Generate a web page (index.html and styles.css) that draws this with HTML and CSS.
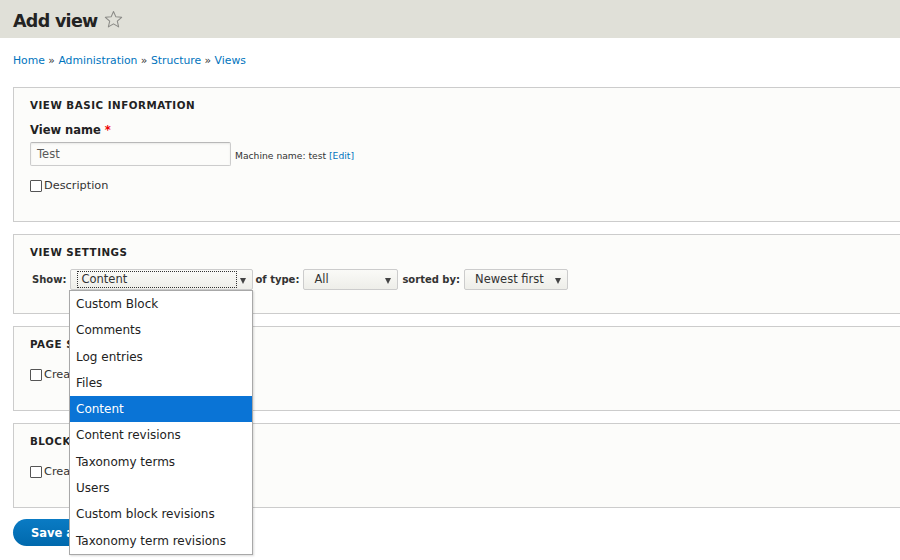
FILE: index.html
```html
<!DOCTYPE html>
<html>
<head>
<meta charset="utf-8">
<link rel="stylesheet" href="styles.css">
</head>
<body>
<header class="page-header">
  <h1 class="page-title">Add view</h1>
  <svg class="star" width="19" height="19" viewBox="0 0 20 20"><path d="M10 1.5 L12.5 7.2 L18.6 7.7 L14 11.8 L15.4 17.8 L10 14.6 L4.6 17.8 L6 11.8 L1.4 7.7 L7.5 7.2 Z" fill="none" stroke="#8a8a86" stroke-width="1.1" stroke-linejoin="round"/></svg>
</header>
<nav class="breadcrumb">
  <a href="#">Home</a> <span class="sep">»</span> <a href="#">Administration</a> <span class="sep">»</span> <a href="#">Structure</a> <span class="sep">»</span> <a href="#">Views</a>
</nav>
<main class="content">
  <section class="fieldset fs-basic">
    <div class="legend">View basic information</div>
    <div class="label">View name <span class="req">*</span></div>
    <div class="name-row">
      <div class="text-input">Test</div>
      <div class="machine">Machine name: test <a href="#">[Edit]</a></div>
    </div>
    <label class="check"><span class="box"></span>Description</label>
  </section>
  <section class="fieldset fs-settings">
    <div class="legend">View settings</div>
    <div class="settings-row">
      <span class="inline-label">Show:</span>
      <span class="select sel-show"><span class="focus">Content</span><span class="arrow"></span></span>
      <span class="inline-label">of type:</span>
      <span class="select sel-type"><span class="val">All</span><span class="arrow"></span></span>
      <span class="inline-label">sorted by:</span>
      <span class="select sel-sort"><span class="val">Newest first</span><span class="arrow"></span></span>
    </div>
  </section>
  <section class="fieldset fs-small">
    <div class="legend">Page settings</div>
    <label class="check"><span class="box"></span>Create a page</label>
  </section>
  <section class="fieldset fs-small">
    <div class="legend">Block settings</div>
    <label class="check"><span class="box"></span>Create a block</label>
  </section>
  <div class="actions">
    <button class="btn-primary">Save and edit</button>
    <button class="btn">Cancel</button>
  </div>
  <ul class="dropdown">
    <li>Custom Block</li>
    <li>Comments</li>
    <li>Log entries</li>
    <li>Files</li>
    <li class="active">Content</li>
    <li>Content revisions</li>
    <li>Taxonomy terms</li>
    <li>Users</li>
    <li>Custom block revisions</li>
    <li>Taxonomy term revisions</li>
  </ul>
</main>
</body>
</html>
```
FILE: styles.css
```css
* { box-sizing: border-box; }
html, body { margin: 0; padding: 0; }
body {
  width: 900px;
  height: 560px;
  overflow: hidden;
  background: #fff;
  font-family: "DejaVu Sans", sans-serif;
  color: #333;
  font-size: 12px;
}
a { color: #0074bd; text-decoration: none; }

.page-header {
  height: 38px;
  background: #e0e0d8;
  display: flex;
  align-items: center;
  padding-left: 13px;
  padding-top: 3px;
}
.page-title {
  margin: 0;
  font-size: 17.5px;
  font-weight: bold;
  color: #232323;
  letter-spacing: -0.7px;
}
.star { margin-left: 6px; margin-top: -2px; }

.breadcrumb {
  padding: 16px 13px 0;
  height: 49px;
  font-size: 10.8px;
  line-height: 14px;
}
.breadcrumb .sep { color: #333; }

.content {
  position: relative;
  padding-left: 13px;
}
.fieldset {
  width: 900px;
  border: 1px solid #ccc;
  background: #fcfcfa;
  padding: 0 16px;
  margin-bottom: 12px;
}
.legend {
  font-size: 10.3px;
  font-weight: bold;
  text-transform: uppercase;
  letter-spacing: 0.05em;
  color: #222;
  line-height: 14px;
  margin-top: 10px;
}
.fs-basic { height: 135px; }
.fs-settings { height: 80px; }
.fs-small { height: 85px; }

.label {
  margin-top: 11px;
  font-weight: bold;
  font-size: 11.5px;
  color: #222;
  line-height: 14px;
}
.req { color: #e00; }
.name-row {
  display: flex;
  align-items: center;
  margin-top: 5px;
}
.text-input {
  width: 201px;
  height: 24px;
  border: 1px solid #ccc;
  border-top-color: #b8b8b8;
  border-radius: 2px;
  background: #fcfcfa;
  box-shadow: inset 0 1px 2px rgba(0,0,0,0.08);
  padding: 0 6px;
  font-size: 11.5px;
  line-height: 22px;
  color: #595959;
}
.machine {
  margin-left: 4px;
  font-size: 9.2px;
  color: #333;
  margin-top: 2px;
}
.check {
  display: flex;
  align-items: center;
  font-size: 11.3px;
  color: #333;
  line-height: 14px;
}
.fs-basic .check { margin-top: 13px; }
.fs-small .check { margin-top: 17px; }
.box {
  width: 12px;
  height: 12px;
  border: 1px solid #555;
  border-radius: 1px;
  background: #fff;
  margin-right: 2px;
}

.settings-row {
  display: flex;
  align-items: center;
  margin-top: 9px;
  height: 22px;
}
.inline-label {
  font-weight: bold;
  font-size: 10px;
  color: #333;
  margin-left: 2px;
  margin-right: 4px;
}
.select {
  position: relative;
  height: 21px;
  border: 1px solid #ccc;
  border-radius: 2px;
  background: linear-gradient(#fafaf7, #eeeee9);
  font-size: 11.5px;
  color: #333;
  line-height: 19px;
  display: flex;
  align-items: center;
}
.select .arrow {
  position: absolute;
  right: 6px;
  top: 8px;
  width: 0;
  height: 0;
  border-left: 3.5px solid transparent;
  border-right: 3.5px solid transparent;
  border-top: 6px solid #444;
}
.sel-show { width: 183px; }
.sel-show .focus {
  margin-left: 6px;
  width: 160px;
  height: 17px;
  border: 1px dotted #333;
  line-height: 15px;
  padding-left: 3px;
}
.sel-type { width: 95px; margin-right: 2px; }
.sel-sort { width: 104px; }
.select .val { padding-left: 10px; }

.actions {
  display: flex;
  gap: 8px;
  margin-top: -1px;
}
.btn-primary {
  height: 27px;
  padding: 0 18px;
  border: 0;
  border-radius: 14px;
  background: linear-gradient(#0a7bc4, #0069ad);
  color: #fff;
  font-family: "DejaVu Sans", sans-serif;
  font-weight: bold;
  font-size: 11.5px;
}
.btn {
  height: 27px;
  padding: 0 18px;
  border: 1px solid #a6a6a6;
  border-radius: 14px;
  background: #f2f1eb;
  font-family: "DejaVu Sans", sans-serif;
  font-weight: bold;
  font-size: 11.5px;
  color: #333;
}

.dropdown {
  position: absolute;
  left: 69px;
  top: 203px;
  width: 184px;
  margin: 0;
  padding: 0;
  list-style: none;
  background: #fff;
  border: 1px solid #a8a8a8;
  box-shadow: 1px 1px 2px rgba(0,0,0,0.15);
}
.dropdown li {
  height: 26.3px;
  line-height: 26px;
  padding-left: 6px;
  font-size: 12px;
  color: #222;
}
.dropdown li.active {
  background: #0a74d6;
  color: #fff;
}
```
